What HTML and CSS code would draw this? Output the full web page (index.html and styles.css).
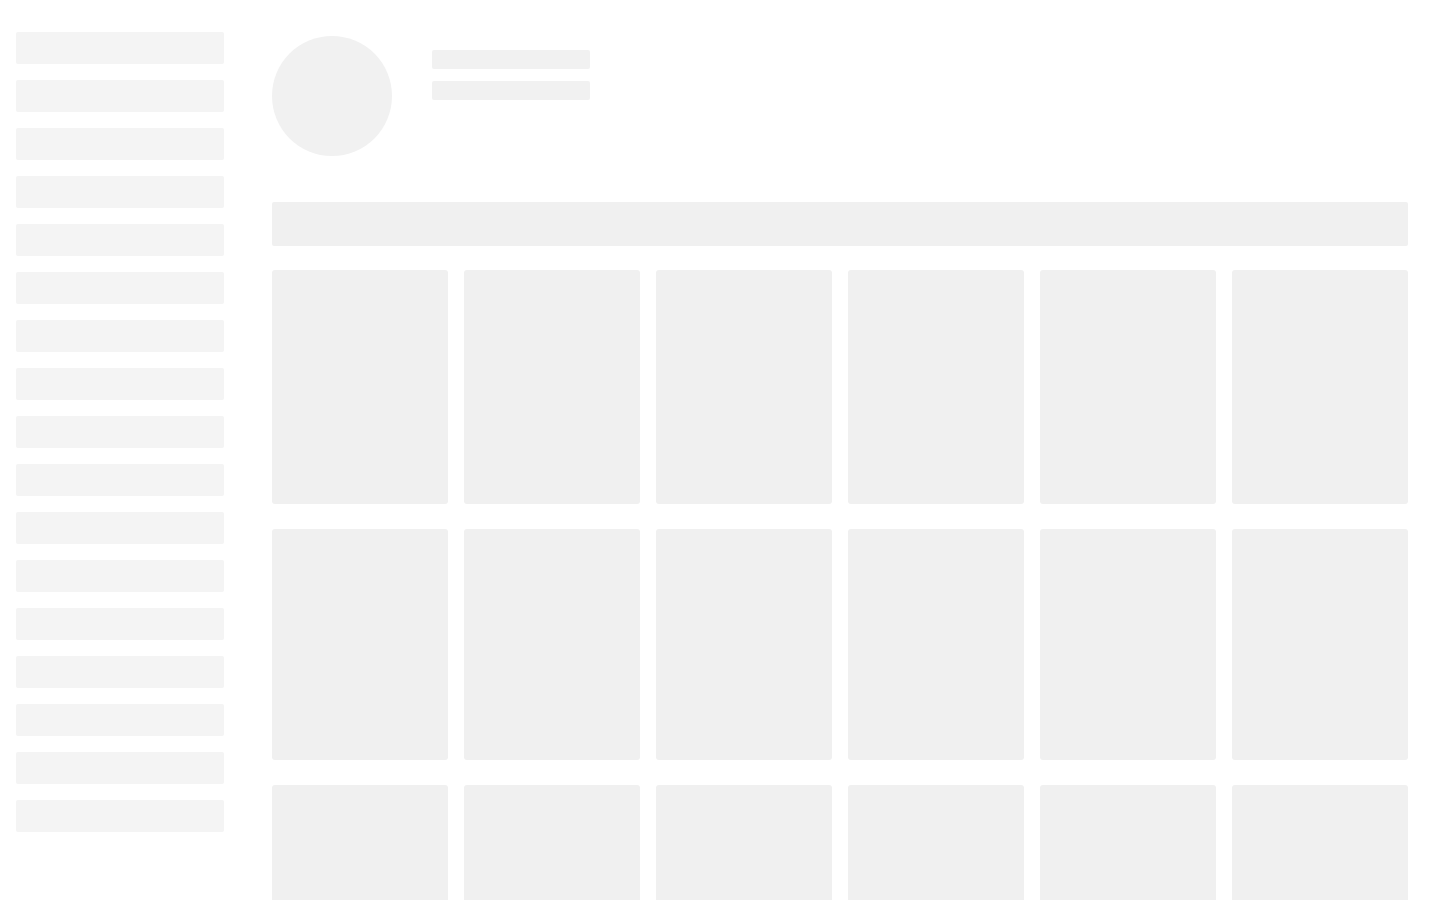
FILE: index.html
```html
<!DOCTYPE html>
<html lang="en">
<head>
<meta charset="utf-8">
<title>Loading</title>
<link rel="stylesheet" href="styles.css">
</head>
<body>
<div class="page">
  <aside class="sidebar">
    <div class="bar"></div><div class="bar"></div><div class="bar"></div><div class="bar"></div>
    <div class="bar"></div><div class="bar"></div><div class="bar"></div><div class="bar"></div>
    <div class="bar"></div><div class="bar"></div><div class="bar"></div><div class="bar"></div>
    <div class="bar"></div><div class="bar"></div><div class="bar"></div><div class="bar"></div>
    <div class="bar"></div>
  </aside>
  <main class="main">
    <header class="profile">
      <div class="avatar"></div>
      <div class="lines">
        <div class="line"></div>
        <div class="line"></div>
      </div>
    </header>
    <div class="banner"></div>
    <div class="grid">
      <div class="card"></div><div class="card"></div><div class="card"></div>
      <div class="card"></div><div class="card"></div><div class="card"></div>
      <div class="card"></div><div class="card"></div><div class="card"></div>
      <div class="card"></div><div class="card"></div><div class="card"></div>
      <div class="card"></div><div class="card"></div><div class="card"></div>
      <div class="card"></div><div class="card"></div><div class="card"></div>
    </div>
  </main>
</div>
</body>
</html>
```
FILE: styles.css
```css
html, body {
  margin: 0;
  padding: 0;
  background: #ffffff;
  font-family: "Liberation Sans", Arial, sans-serif;
}
.page {
  display: flex;
  height: 900px;
  overflow: hidden;
}
.sidebar {
  width: 208px;
  flex: 0 0 208px;
  padding: 32px 0 0 16px;
  display: flex;
  flex-direction: column;
  gap: 16px;
}
.bar {
  height: 32px;
  background: #f4f4f4;
  border-radius: 2px;
}
.main {
  flex: 1;
  padding: 36px 32px 0 48px;
  min-width: 0;
}
.profile {
  display: flex;
  align-items: flex-start;
  gap: 40px;
  height: 120px;
}
.avatar {
  width: 120px;
  height: 120px;
  border-radius: 50%;
  background: #f1f1f1;
}
.lines {
  padding-top: 14px;
  display: flex;
  flex-direction: column;
  gap: 12px;
}
.line {
  width: 158px;
  height: 19px;
  background: #f1f1f1;
  border-radius: 2px;
}
.banner {
  margin-top: 46px;
  height: 44px;
  background: #f0f0f0;
  border-radius: 2px;
}
.grid {
  margin-top: 24px;
  display: grid;
  grid-template-columns: repeat(6, 176px);
  grid-template-rows: 234px 231px 232px;
  column-gap: 16px;
  row-gap: 25px;
}
.card {
  background: #f0f0f0;
  border-radius: 3px;
}
```
